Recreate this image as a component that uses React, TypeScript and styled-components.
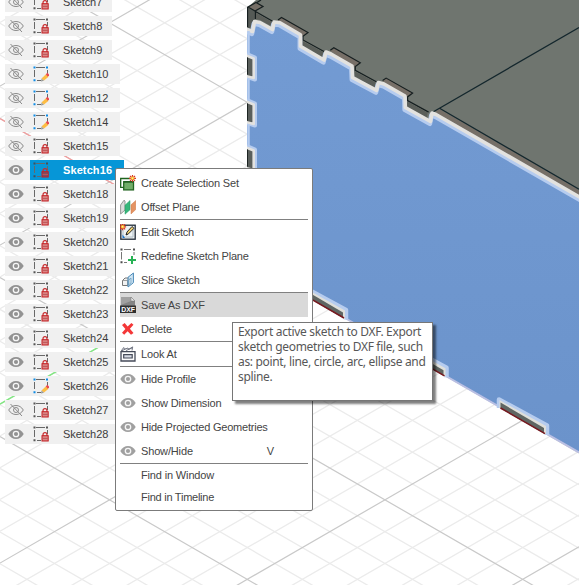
import React from "react";
import styled, { createGlobalStyle, css } from "styled-components";

const GlobalStyle = createGlobalStyle`
  html, body, #root { margin: 0; padding: 0; height: 100%; }
  body { overflow: hidden; background: #fff; font-family: "Liberation Sans", Arial, sans-serif; }
`;

const Workspace = styled.main`
  position: relative;
  width: 579px;
  height: 585px;
  overflow: hidden;
  background: #fff;
`;

const Canvas = styled.svg`
  position: absolute;
  inset: 0;
  display: block;
`;

const Browser = styled.ul`
  position: relative;
  display: flex;
  flex-direction: column;
  align-items: flex-start;
  gap: 4px;
  width: 125px;
  margin: -8px 0 0;
  padding: 0 0 0 5px;
  list-style: none;
`;

const BrowserRow = styled.li<{ $wide: boolean }>`
  display: flex;
  height: 20px;
  width: ${(p) => (p.$wide ? 115 : 107)}px;
  background: #f0f0f0;
`;

const EyeCell = styled.span`
  display: flex;
  flex: none;
  align-items: center;
  justify-content: center;
  width: 22px;
  padding-right: 3px;
`;

const SketchCell = styled.span<{ $selected?: boolean }>`
  display: flex;
  flex: none;
  align-items: center;
  width: 87px;
  padding-left: 3px;
  gap: 14px;
  color: #3c3c3c;
  font-size: 11px;
  line-height: 20px;
  letter-spacing: -0.08px;
  white-space: nowrap;
  ${(p) =>
    p.$selected &&
    css`
      width: 91px;
      background: #0696d7;
      color: #fff;
      font-weight: bold;
      letter-spacing: 0.1px;
    `}
`;

const Menu = styled.div`
  position: absolute;
  left: 115px;
  top: 168px;
  box-sizing: border-box;
  width: 198px;
  height: 343px;
  padding: 2px 4px;
  border: 1px solid #7b7b7b;
  border-radius: 2px;
  background: #fff;
`;

const MenuItem = styled.div<{ $active?: boolean; $short?: boolean; $track?: number }>`
  display: flex;
  align-items: center;
  height: ${(p) => (p.$short ? 22 : 24)}px;
  background: ${(p) => (p.$active ? "#d9d9d9" : "transparent")};
  color: #444;
  font-size: 11px;
  letter-spacing: ${(p) => p.$track ?? -0.15}px;
  white-space: nowrap;
`;

const IconSlot = styled.span`
  display: flex;
  width: 16px;
  margin-right: 5px;
`;

const Shortcut = styled.span`
  margin-left: auto;
  margin-right: 34px;
`;

const Separator = styled.div`
  height: 1px;
  background: #808080;
`;

const Tooltip = styled.div`
  position: absolute;
  left: 232px;
  top: 322px;
  box-sizing: border-box;
  width: 201px;
  height: 79px;
  padding: 1px 0 0 5px;
  border: 1px solid #767676;
  background: #fff;
  box-shadow: 3px 3px 2px rgba(0, 0, 0, 0.5);
  color: #575757;
  font-family: "Noto Sans", "Open Sans", sans-serif;
  font-size: 12px;
  line-height: 15px;
  letter-spacing: -0.33px;
  white-space: pre-line;
`;

/* ---------- icons ---------- */

const Icon = ({ children }: { children: React.ReactNode }) => (
  <svg width="16" height="16" viewBox="0 0 16 16">
    {children}
  </svg>
);

const EyeOn = ({ color = "#929292" }: { color?: string }) => (
  <Icon>
    <path d="M.3 8C2.3 4.7 4.8 3 8 3s5.700 1.700 7.700 5c-2 3.300-4.500 5-7.700 5S2.300 11.300.3 8Z" fill={color} />
    <circle cx="8" cy="8" r="2.700" fill={color} stroke="#f6f6f6" strokeWidth="1.300" />
  </Icon>
);

const EyeOff = () => (
  <Icon>
    <g fill="none" stroke="#8b8b8b">
      <path d="M.7 8C2.500 5 5 3.500 8 3.500S13.500 5 15.300 8c-1.800 3-4.300 4.500-7.300 4.500S2.500 11 .7 8Z" />
      <circle cx="8" cy="8" r="2.500" />
      <path d="M2.500 2 14 14" />
    </g>
  </Icon>
);

const Frame = ({ dot }: { dot: string }) => (
  <>
    <path d="M3 1.500h9M1.500 4v7M14.500 4v4M4 14.500h4" stroke="#686868" fill="none" />
    <path d="M.5.5h2v2h-2zM13 .5h2v2h-2zM.5 13.300h2v2h-2z" fill={dot} />
  </>
);

const SketchLocked = ({ selected }: { selected?: boolean }) => (
  <Icon>
    <Frame dot={selected ? "#454f58" : "#555"} />
    <path d="M10 10V8.700C10 7.300 10.800 6.700 12 6.700s2 .6 2 2V10" fill="none" stroke="#c92a2c" strokeWidth="1.200" />
    <rect x="9" y="9.700" width="6.200" height="5.300" fill={selected ? "#7c4a62" : "#d98787"} stroke="#c41f22" />
    <path d="M9.500 12.400h5.500" stroke="#bf5557" />
  </Icon>
);

const SketchOpen = () => (
  <Icon>
    <Frame dot="#0d8be6" />
    <path d="m8.500 12.500 4.500-4.300 2.600 2.500-4.600 3.900Z" fill="#fdbd44" />
    <path d="m12.800 8.300 1.600-1.500 2 2-1.700 1.900Z" fill="#e84850" />
    <path d="m8.500 12.500 2.500 2.200-3 .9Z" fill="#999a96" />
  </Icon>
);

const Spark = ({ x, y }: { x: number; y: number }) => (
  <g transform={`translate(${x} ${y})`}>
    <path d="M0-3.500V3.500M-3.500 0h7M-2.500-2.500l5 5M2.500-2.500l-5 5" stroke="#d8321d" strokeWidth="1.200" />
    <circle r="1.800" fill="#f7be34" />
    <circle r=".7" fill="#fff2a0" />
  </g>
);

const SelectionSet = () => (
  <Icon>
    <path d="M10 3.500H.7v8.800H4" fill="none" stroke="#1e641e" strokeWidth="1.300" />
    <rect x="3.700" y="6.700" width="9.800" height="8.200" fill="#71ad69" stroke="#236522" strokeWidth="1.300" />
    <path d="M4 7h9" stroke="#18541c" />
    <Spark x={12.5} y={3.3} />
  </Icon>
);

const OffsetPlane = () => (
  <Icon>
    <path d="M.6 6 4 1.200 5 2v9L.6 15Z" fill="#ddd" stroke="#8a8e8c" strokeWidth=".9" />
    <path d="M5 6.200 10 1.500v9.300l-5 4.400Z" fill="#36b77b" stroke="#259660" strokeWidth=".5" />
    <path d="m11 5.800 4.800-4.300v9L11 14.900Z" fill="#e49362" stroke="#cf7c4d" strokeWidth=".5" />
  </Icon>
);

const EditSketch = () => (
  <Icon>
    <rect x=".8" y="1.200" width="14.400" height="14" fill="#eef3f5" stroke="#202b38" strokeWidth="1.300" />
    <path d="M3 5v8h10V4" fill="none" stroke="#b1bec6" />
    <path d="M2.500 10.500 5 14H2.500Z" fill="#1572cd" />
    <path d="m6 11 1-3 5-5.500 2 1.800-5.500 5.500Z" fill="#efd06c" stroke="#282b2f" />
    <path d="m6 11 .6-1.700L8 10.500Z" fill="#222" />
    <Spark x={2.6} y={2.8} />
  </Icon>
);

const RedefinePlane = () => (
  <Icon>
    <path d="M4 1.500h7M1.500 4v7.500M14 4v3M4 14.500h3" stroke="#777" fill="none" />
    <path d="M.5.500h2v2h-2zM13 .5h2v2h-2zM.5 13.300h2v2h-2z" fill="#4c4c4c" />
    <path d="M12 8v8M8 12h8" stroke="#27b254" strokeWidth="2" />
  </Icon>
);

const SliceSketch = () => (
  <Icon>
    <path d="M2.500 8.500 5 6h4v5.500l-1.500 2h-5Z" fill="#f2f2f2" stroke="#777" />
    <path d="M2.500 8.500h5v5M7.500 8.500 9 6.500" fill="none" stroke="#888" strokeWidth=".8" />
    <path d="M8 5.300 13.400 1v9.700L8 15Z" fill="#bddcef" fillOpacity=".75" stroke="#4a89b7" />
    <path d="M8.500 8.500 11 6v5l-2.500 2Z" fill="none" stroke="#6599bd" strokeWidth=".7" />
  </Icon>
);

const DxfText = styled.text`
  font: bold 7px "Liberation Sans", sans-serif;
  letter-spacing: 0;
  fill: #fff;
`;

const Dxf = () => (
  <Icon>
    <path d="M1 0h10l4 4v5H1Z" fill="#858585" />
    <path d="M1 0h10v4L1 8Z" fill="#a1a1a1" />
    <path d="M11 0v4h4Z" fill="#e7e7e7" stroke="#707070" strokeWidth=".5" />
    <path d="M0 8.500h16V16H0Z" fill="#303030" />
    <DxfText x="1.200" y="15" textLength="13.800" lengthAdjust="spacingAndGlyphs">
      DXF
    </DxfText>
  </Icon>
);

const Delete = () => (
  <Icon>
    <path d="M2 4 4.700 2 7.600 5.500 11.400 2 13.500 3.800 9.900 7.800 13.500 12 11 13.800 7.600 10.300 4.200 13.700 2 11.800 5.400 7.900Z" fill="#f43738" />
  </Icon>
);

const LookAt = () => (
  <Icon>
    <path d="M1 5.700h14v9.300H1Z" fill="#fbfbfc" stroke="#454b59" strokeWidth="1.300" />
    <path d="M3.700 8.700h8.500v3.300H3.700Z" fill="#d7dbe5" stroke="#454b59" strokeWidth="1.200" />
    <path d="M1 5.200 3.700 1.500l.8 1.800L8 2l.7 1.300L12.700.9 12 4.500M2 4.800l3.500-2M6 4.500l6-2.500" fill="none" stroke="#646977" strokeWidth=".9" />
  </Icon>
);

/* ---------- model viewport ---------- */

const DX = 27.54;
const DY = 15.9;
const SLOPE = DY / DX;
// one entry per minor grid step; every fifth is a major line
const steps = Array.from({ length: 48 }, (_, i) => i - 20);

const Grid = () => (
  <g fill="none">
    {[false, true].map((major) =>
      steps
        .filter((n) => (n % 5 === 0) === major)
        .map((n) => {
          const down = 118.6 + n * 2 * DY;
          const up = 404.1 + n * 2 * DY;
          return (
            <path
              key={n}
              d={`M0 ${down}L579 ${down + 579 * SLOPE}M0 ${up}L579 ${up - 579 * SLOPE}`}
              stroke={major ? "#c9c9c9" : "#ebebeb"}
              strokeWidth={major ? 1.2 : 1.3}
            />
          );
        })
    )}
    <path d="M0 118.600 125 190.800" stroke="#f49c9c" strokeWidth="1.300" />
    <path d="M0 404.100 125 331.900" stroke="#83e883" strokeWidth="1.300" />
  </g>
);

const topRim =
  "M246 29 252.500 31.500 254.500 21.500 260 22.500 272.500 29.500 274 22 280 22.700 300.500 34.700 300.500 46.300 324 60 326 52 331 54 352 66 352.500 77.500 376.500 90.300 378.500 82.500 384 84 405 96 405.300 107.500 430.500 121.500 432 113 436 114.500 582 198.500";

const Model = () => (
  <g>
    <path d="M247 8 256 0H579V200L247 60Z" fill="#6f756f" />
    <path
      d="M247 29 254 21 260 22 272 30 274 22 281 23 300 35V46L324 60 326 52 352 66V77L377 90 379 82 405 96V107L431 121 432 113 579 197.500V452L247 261.500Z"
      fill="url(#face)"
    />
    {/* corner block */}
    <path d="M247 7 255 11.500V20L253 21 251 29 247 28Z" fill="#555a56" />
    <path d="M248 7 256 2.500 263 6.500 255 11Z" fill="#756e66" stroke="#161f20" strokeWidth="1.200" />
    <path d="M255.500 11V19M247.500 7V27M255.500 11.500 273 21.500M257 2.500 261 0" stroke="#161f20" strokeWidth="1.300" fill="none" />
    <path d="m256 13 17 9.500V27l-13-7-4-1Z" fill="#5c5f5a" />
    {/* finger joints along the top edge */}
    {[0, 1, 2].map((i) => (
      <g key={i} transform={`translate(${i * 52.3} ${i * 30.3})`}>
        <path d="m278 20.500 4-3 26 15-5 3-1 2Z" fill="#776f67" />
        <path d="m278 20 3.500-2.500 26.500 15-5 3.800 0 3.700 21 11.500" fill="none" stroke="#161f20" strokeWidth="1.200" />
        <path d="m302.500 41 20.500 11-.7 6-19.800-12Z" fill="#5b5f5a" />
      </g>
    ))}
    <path d="M439 109 579 190V195L435 112Z" fill="#766f67" />
    <path d="M440 108.500 579 189.300M433 112 579 27.500" stroke="#14272d" strokeWidth="1.300" fill="none" />
    {/* selection halo */}
    <path d={topRim} transform="translate(-.6 2.200)" fill="none" stroke="#b6ccef" strokeWidth="4.700" strokeLinejoin="round" />
    <path d={topRim} fill="none" stroke="#e3e2df" strokeWidth="3.600" strokeLinejoin="round" />
    <path d="M248.500 31V168" stroke="#b6ccef" strokeWidth="2.500" />
    {[57.5, 103.5, 149.5].map((y) => (
      <g key={y}>
        <path d={`M247 ${y - 3.5}L255 ${y}V${y + 22}L247 ${y + 19.5}`} fill="none" stroke="#b6ccef" strokeWidth="4" strokeLinejoin="round" />
        <path d={`M247 ${y - 1.5}L253.500 ${y + 1}V${y + 20}L247 ${y + 18}Z`} fill="#5a5f5c" />
        <path d={`M246 ${y - 2}L253.700 ${y + 1}V${y + 20.5}L246 ${y + 18.5}`} fill="none" stroke="#e3e2df" strokeWidth="2.600" strokeLinejoin="round" />
        <path d={`M247.500 ${y}V${y + 17}`} stroke="#1d2423" />
      </g>
    ))}
    {/* lower edge */}
    <path d="M312 299 579 452.500" stroke="#b9bfe3" strokeWidth="2" />
    {[
      [300, 344],
      [396, 444.5],
      [500.5, 545],
    ].map(([a, b]) => {
      const y = (x: number) => 408 + (x - 500.5) * 0.575;
      return (
        <g key={a}>
          <path d={`M${a - 1.5} ${y(a)}V${y(a) - 8.5}L${b + 2} ${y(b) - 8}V${y(b) + 1.5}`} fill="none" stroke="#b6ccef" strokeWidth="4.500" strokeLinejoin="round" />
          <path d={`M${a - 1} ${y(a)}V${y(a) - 8}L${b + 1} ${y(b) - 7.5}V${y(b) + 1}Z`} fill="#dfdfda" />
          <path d={`M${a} ${y(a)}V${y(a) - 5.5}L${b - 1} ${y(b) - 5.5}V${y(b)}Z`} fill="#5f6663" />
          <path d={`M${a} ${y(a)}L${b} ${y(b)}`} stroke="#77191f" strokeWidth="1.500" />
        </g>
      );
    })}
  </g>
);

type Kind = "locked" | "open";
const sketches: { n: number; kind: Kind; visible: boolean }[] = [
  { n: 7, kind: "locked", visible: false },
  { n: 8, kind: "locked", visible: false },
  { n: 9, kind: "locked", visible: false },
  { n: 10, kind: "open", visible: false },
  { n: 12, kind: "open", visible: false },
  { n: 14, kind: "open", visible: false },
  { n: 15, kind: "locked", visible: false },
  { n: 16, kind: "locked", visible: true },
  { n: 18, kind: "locked", visible: true },
  { n: 19, kind: "locked", visible: true },
  { n: 20, kind: "locked", visible: true },
  { n: 21, kind: "locked", visible: true },
  { n: 22, kind: "locked", visible: true },
  { n: 23, kind: "locked", visible: true },
  { n: 24, kind: "locked", visible: true },
  { n: 25, kind: "locked", visible: true },
  { n: 26, kind: "open", visible: true },
  { n: 27, kind: "locked", visible: false },
  { n: 28, kind: "locked", visible: true },
];

type Entry = {
  label: string;
  icon?: React.ReactNode;
  active?: boolean;
  shortcut?: string;
  track?: number;
};

const menuEye = <EyeOn color="#a0a0a0" />;
const groups: Entry[][] = [
  [
    { label: "Create Selection Set", icon: <SelectionSet /> },
    { label: "Offset Plane", icon: <OffsetPlane /> },
  ],
  [
    { label: "Edit Sketch", icon: <EditSketch />, track: -0.24 },
    { label: "Redefine Sketch Plane", icon: <RedefinePlane />, track: -0.2 },
    { label: "Slice Sketch", icon: <SliceSketch /> },
  ],
  [
    { label: "Save As DXF", icon: <Dxf />, active: true },
    { label: "Delete", icon: <Delete /> },
  ],
  [{ label: "Look At", icon: <LookAt /> }],
  [
    { label: "Hide Profile", icon: menuEye },
    { label: "Show Dimension", icon: menuEye },
    { label: "Hide Projected Geometries", icon: menuEye, track: -0.22 },
    { label: "Show/Hide", icon: menuEye, shortcut: "V" },
  ],
  [
    { label: "Find in Window" },
    { label: "Find in Timeline", track: -0.25 },
  ],
];

const tip = [
  "Export active sketch to DXF. Export",
  "sketch geometries to DXF file, such",
  "as: point, line, circle, arc, ellipse and",
  "spline.",
].join("\n");

export default function App() {
  return (
    <Workspace>
      <GlobalStyle />
      <Canvas width="579" height="585" viewBox="0 0 579 585">
        <defs>
          <linearGradient id="face" x1="0" y1="0" x2="0" y2="1">
            <stop offset="0" stopColor="#739bd3" />
            <stop offset="1" stopColor="#6b93cb" />
          </linearGradient>
          <clipPath id="modelArea">
            <path d="M247 0H579V585H247Z" />
          </clipPath>
        </defs>
        <Grid />
        <g clipPath="url(#modelArea)">
          <Model />
        </g>
      </Canvas>
      <Browser>
        {sketches.map(({ n, kind, visible }) => (
          <BrowserRow key={n} $wide={n > 9}>
            <EyeCell>{visible ? <EyeOn /> : <EyeOff />}</EyeCell>
            <SketchCell $selected={n === 16}>
              {kind === "locked" ? <SketchLocked selected={n === 16} /> : <SketchOpen />}
              <span>{`Sketch${n}`}</span>
            </SketchCell>
          </BrowserRow>
        ))}
      </Browser>
      <Menu>
        {groups.map((group, g) => (
          <React.Fragment key={g}>
            {g > 0 && <Separator />}
            {group.map((e) => (
              <MenuItem key={e.label} $active={e.active} $short={!e.icon} $track={e.track}>
                <IconSlot>{e.icon}</IconSlot>
                {e.label}
                {e.shortcut && <Shortcut>{e.shortcut}</Shortcut>}
              </MenuItem>
            ))}
          </React.Fragment>
        ))}
      </Menu>
      <Tooltip>{tip}</Tooltip>
    </Workspace>
  );
}
